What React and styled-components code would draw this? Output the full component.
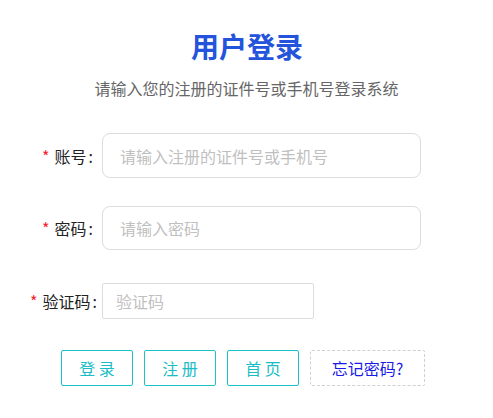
import React from 'react';
import styled, { createGlobalStyle } from 'styled-components';

const GlobalStyle = createGlobalStyle`
	html, body {
		margin: 0;
		padding: 0;
		background: #fff;
	}
	body {
		font-family: "Noto Sans CJK SC", "Liberation Sans", sans-serif;
		color: #333;
	}
`;

const Page = styled.div`
	width: 493px;
	padding-top: 32px;
	display: flex;
	flex-direction: column;
`;

const Title = styled.h1`
	margin: 0;
	text-align: center;
	font-size: 28px;
	line-height: 28px;
	font-weight: 700;
	color: #2453dc;
	padding-left: 1px;
`;

const Subtitle = styled.p`
	margin: 20px 0 0;
	text-align: center;
	font-size: 16px;
	line-height: 16px;
	color: #666;
`;

const Form = styled.form`
	margin-top: 37px;
	display: flex;
	flex-direction: column;
`;

const Row = styled.div`
	display: flex;
	align-items: center;
	margin-bottom: ${props => props.$gap}px;
`;

const Label = styled.label`
	width: 102px;
	box-sizing: border-box;
	padding-right: ${props => props.$pad}px;
	display: flex;
	justify-content: flex-end;
	align-items: center;
	font-size: 16px;
	line-height: 20px;
	color: #222;
	white-space: nowrap;
`;

const Star = styled.span`
	color: #f5222d;
	margin-right: 5px;
`;

const Colon = styled.span`
	margin-left: 2px;
`;

const Input = styled.input`
	box-sizing: border-box;
	width: ${props => props.$w}px;
	height: ${props => props.$h}px;
	border: 1px solid #dcdcdc;
	border-radius: ${props => props.$r}px;
	padding: 0 0 0 ${props => props.$pl}px;
	font-family: inherit;
	font-size: 16px;
	color: #333;
	outline: none;
	background: #fff;

	&::placeholder {
		color: #bfbfbf;
	}
`;

const Actions = styled.div`
	display: flex;
	gap: 11px;
	padding-left: 61px;
	margin-top: 31px;
`;

const Button = styled.button`
	box-sizing: border-box;
	width: 72px;
	height: 36px;
	border: 1px solid #1cc3cb;
	border-radius: 2px;
	background: #fff;
	color: #1cbcc6;
	font-family: inherit;
	font-size: 16px;
	padding: 0;
	cursor: pointer;
`;

const ForgotButton = styled(Button)`
	width: 115px;
	border: 1px dashed #d0d0d0;
	color: #1a1ae6;
`;

export default function App() {
	return (
		<Page>
			<GlobalStyle />
			<Title>用户登录</Title>
			<Subtitle>请输入您的注册的证件号或手机号登录系统</Subtitle>
			<Form onSubmit={e => e.preventDefault()}>
				<Row $gap={28}>
					<Label $pad={9}><Star>*</Star>账号<Colon>:</Colon></Label>
					<Input $w={319} $h={45} $r={8} $pl={17} placeholder="请输入注册的证件号或手机号" />
				</Row>
				<Row $gap={33}>
					<Label $pad={9}><Star>*</Star>密码<Colon>:</Colon></Label>
					<Input $w={319} $h={44} $r={8} $pl={17} type="password" placeholder="请输入密码" />
				</Row>
				<Row $gap={0}>
					<Label $pad={5}><Star>*</Star>验证码<Colon>:</Colon></Label>
					<Input $w={212} $h={36} $r={2} $pl={13} placeholder="验证码" />
				</Row>
			</Form>
			<Actions>
				<Button>登 录</Button>
				<Button>注 册</Button>
				<Button>首 页</Button>
				<ForgotButton>忘记密码?</ForgotButton>
			</Actions>
		</Page>
	);
}
